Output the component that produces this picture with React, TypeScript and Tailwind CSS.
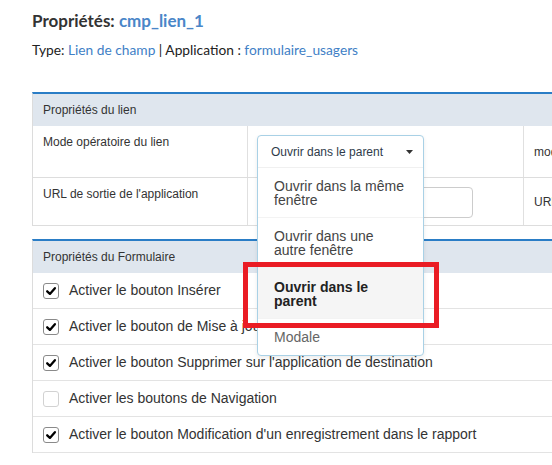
import React from "react";

const Check = ({ checked }: { checked: boolean }) => (
  <div
    className={`w-4 h-4 shrink-0 rounded-[3px] border flex items-center justify-center bg-white ${
      checked ? "border-[#8a8a8a]" : "border-[#d2d2d2]"
    }`}
  >
    {checked && (
      <svg width="12" height="12" viewBox="0 0 12 12">
        <path
          d="M2.2 6.3 L4.9 8.9 L9.9 3.2"
          fill="none"
          stroke="#000"
          strokeWidth="2.3"
          strokeLinecap="round"
          strokeLinejoin="round"
        />
      </svg>
    )}
  </div>
);

const rows: { label: string; checked: boolean }[] = [
  { label: "Activer le bouton Insérer", checked: true },
  { label: "Activer le bouton de Mise à jour", checked: true },
  { label: "Activer le bouton Supprimer sur l'application de destination", checked: true },
  { label: "Activer les boutons de Navigation", checked: false },
  { label: "Activer le bouton Modification d'un enregistrement dans le rapport", checked: true },
];

export default function App() {
  return (
    <div className="relative w-[552px] h-[465px] overflow-hidden bg-white font-['Liberation_Sans',Arial,sans-serif] text-[#333]">
      <div className="pl-8 pt-[10px] font-['Lato',sans-serif]">
        <h1 className="text-[17px] leading-[22px] font-bold text-[#333]">
          Propriétés: <span className="text-[#4a86c8]">cmp_lien_1</span>
        </h1>
        <p className="mt-[9px] text-[13.75px] leading-[17px] text-[#222]">
          Type: <span className="text-[#3f7fc6]">Lien de champ</span> | Application :{" "}
          <span className="text-[#3f7fc6]">formulaire_usagers</span>
        </p>
      </div>

      {/* Panel 1 */}
      <div className="ml-8 mt-[34px] w-[640px] border-t-2 border-t-[#2a7dc6] border-l border-l-[#dcdcdc]">
        <div className="h-[32px] bg-[#dfe6ee] flex items-center pl-[10px] text-[12px] text-[#333]">
          Propriétés du lien
        </div>
        <div className="grid grid-cols-[215px_276px_1fr] h-[52px] border-b border-b-[#dddddd] text-[12px]">
          <div className="border-r border-r-[#e0e0e0] pl-[10px] pt-[9px] leading-[14px]">
            Mode opératoire du lien
          </div>
          <div className="border-r border-r-[#e0e0e0] pl-[9px] pt-[9px]">
            <div className="relative w-[167px]">
              <div className="absolute left-0 top-0 z-10 w-[167px] bg-white border border-[#a9d1e6] rounded-[4px] shadow-[0_2px_4px_rgba(0,0,0,0.08)]">
                <div className="h-[32px] flex items-center justify-between pl-[13px] pr-[10px] text-[12px] text-[#2f3b4a] border-b border-b-[#f0f0f0]">
                  <span>Ouvrir dans le parent</span>
                  <svg width="7" height="4" viewBox="0 0 7 4">
                    <path d="M0 0 H7 L3.5 4 Z" fill="#333" />
                  </svg>
                </div>
                <div className="px-4 pt-[11px] pb-[10px] text-[14px] leading-[14px] text-[#444] border-b border-b-[#f3f3f3]">
                  Ouvrir dans la même fenêtre
                </div>
                <div className="px-4 pt-[11px] pb-[10px] text-[14px] leading-[14px] text-[#444] border-b border-b-[#f3f3f3]">
                  Ouvrir dans une autre fenêtre
                </div>
                <div className="px-4 pt-[12px] pb-[10px] text-[14px] leading-[14px] font-bold text-[#222] bg-[#f5f5f5] border-b border-b-[#f3f3f3]">
                  Ouvrir dans le parent
                </div>
                <div className="px-4 pt-[11px] pb-[11px] text-[14px] leading-[14px] text-[#666] rounded-b-[4px]">
                  Modale
                </div>
              </div>
            </div>
          </div>
          <div className="flex items-center pl-[10px] text-[12px] whitespace-nowrap">mode</div>
        </div>
        <div className="grid grid-cols-[215px_276px_1fr] h-[48px] border-b border-b-[#dddddd] text-[12px]">
          <div className="border-r border-r-[#e0e0e0] pl-[10px] pt-[9px] leading-[14px]">
            URL de sortie de l'application
          </div>
          <div className="border-r border-r-[#e0e0e0] pl-[9px] pt-[9px]">
            <div className="w-[216px] h-[31px] border border-[#cccccc] rounded-[4px] bg-white" />
          </div>
          <div className="flex items-center pl-[10px] text-[12px] whitespace-nowrap">URL</div>
        </div>
      </div>

      {/* Panel 2 */}
      <div className="ml-8 mt-[13px] w-[640px] border-t-2 border-t-[#2a7dc6] border-l border-l-[#dcdcdc]">
        <div className="h-[32px] bg-[#dfe6ee] flex items-center pl-[10px] text-[12px] text-[#333]">
          Propriétés du Formulaire
        </div>
        {rows.map((r) => (
          <div
            key={r.label}
            className="h-[36px] border-b border-b-[#e3e3e3] flex items-center pl-[10px] gap-[10px] text-[14px] text-[#333] whitespace-nowrap"
          >
            <Check checked={r.checked} />
            <span>{r.label}</span>
          </div>
        ))}
      </div>

      {/* Annotation */}
      <div className="absolute left-[243px] top-[262px] w-[196px] h-[66px] border-[5px] border-[#ea1c24] z-20 pointer-events-none" />
    </div>
  );
}
